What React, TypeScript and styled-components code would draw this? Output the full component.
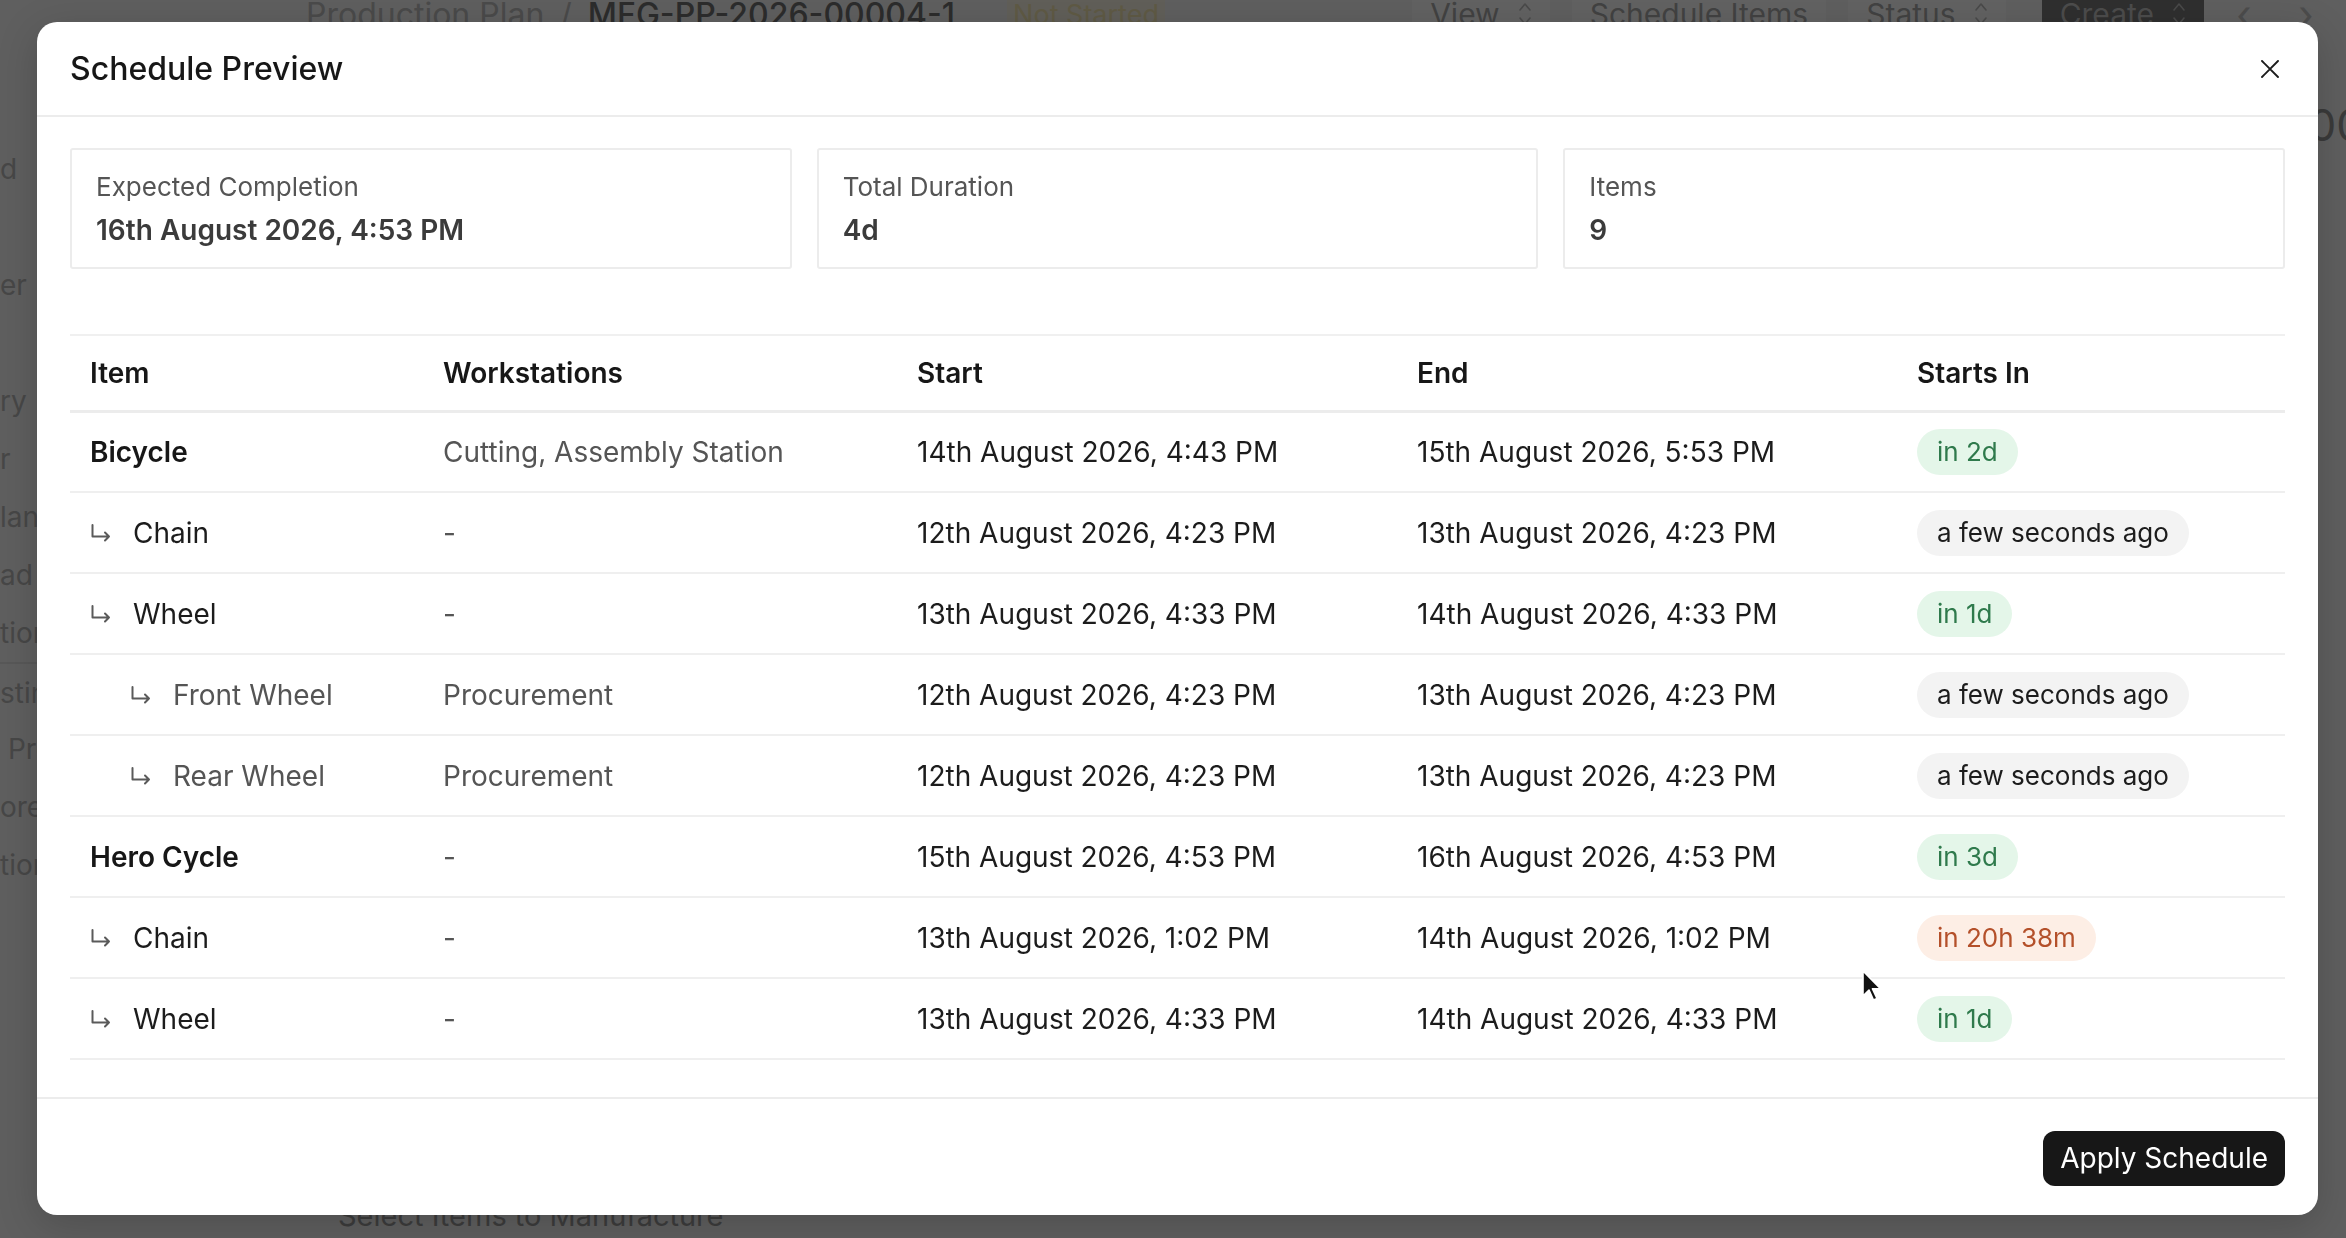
import * as React from 'react';
import styled, { createGlobalStyle, css } from 'styled-components';

type Tone = 'green' | 'gray' | 'orange';

type ScheduleRow = {
  name: string;
  level: number;
  workstations: string;
  start: string;
  end: string;
  startsIn: string;
  tone: Tone;
};

const rows: ScheduleRow[] = [
  { name: 'Bicycle', level: 0, workstations: 'Cutting, Assembly Station', start: '14th August 2026, 4:43 PM', end: '15th August 2026, 5:53 PM', startsIn: 'in 2d', tone: 'green' },
  { name: 'Chain', level: 1, workstations: '-', start: '12th August 2026, 4:23 PM', end: '13th August 2026, 4:23 PM', startsIn: 'a few seconds ago', tone: 'gray' },
  { name: 'Wheel', level: 1, workstations: '-', start: '13th August 2026, 4:33 PM', end: '14th August 2026, 4:33 PM', startsIn: 'in 1d', tone: 'green' },
  { name: 'Front Wheel', level: 2, workstations: 'Procurement', start: '12th August 2026, 4:23 PM', end: '13th August 2026, 4:23 PM', startsIn: 'a few seconds ago', tone: 'gray' },
  { name: 'Rear Wheel', level: 2, workstations: 'Procurement', start: '12th August 2026, 4:23 PM', end: '13th August 2026, 4:23 PM', startsIn: 'a few seconds ago', tone: 'gray' },
  { name: 'Hero Cycle', level: 0, workstations: '-', start: '15th August 2026, 4:53 PM', end: '16th August 2026, 4:53 PM', startsIn: 'in 3d', tone: 'green' },
  { name: 'Chain', level: 1, workstations: '-', start: '13th August 2026, 1:02 PM', end: '14th August 2026, 1:02 PM', startsIn: 'in 20h 38m', tone: 'orange' },
  { name: 'Wheel', level: 1, workstations: '-', start: '13th August 2026, 4:33 PM', end: '14th August 2026, 4:33 PM', startsIn: 'in 1d', tone: 'green' },
];

const stats = [
  { label: 'Expected Completion', value: '16th August 2026, 4:53 PM' },
  { label: 'Total Duration', value: '4d' },
  { label: 'Items', value: '9' },
];

// what peeks out of the sidebar left of the dialog
const sidebarBits = ['d', '', 'er', '', 'ry', 'r', 'lan', 'ad', 'tion', 'stin', ' Pro', 'ore', 'tion'];

const GlobalStyle = createGlobalStyle`
  html, body {
    margin: 0;
    padding: 0;
    overflow: hidden;
    background: #5f5f5f;
  }
  * {
    box-sizing: border-box;
  }
`;

export default function App() {
  return (
    <>
      <GlobalStyle />
      <Page>
        <PageHeader>
          <Crumb>Production Plan</Crumb>
          <CrumbSep>/</CrumbSep>
          <CrumbCurrent>MFG-PP-2026-00004-1</CrumbCurrent>
          <StatusTag>Not Started</StatusTag>
          <Spacer />
          <HeaderAction>
            View <Chevrons />
          </HeaderAction>
          <HeaderAction>Schedule Items</HeaderAction>
          <HeaderAction>
            Status <Chevrons />
          </HeaderAction>
          <HeaderAction dark>
            Create <Chevrons />
          </HeaderAction>
          <PagerArrow>‹</PagerArrow>
          <PagerArrow>›</PagerArrow>
        </PageHeader>
        <PageBody>
          <Sidebar>
            {sidebarBits.map((bit, i) => (
              <SidebarItem key={i} divided={i === 9}>
                {bit}
              </SidebarItem>
            ))}
          </Sidebar>
          <MainArea>
            <BigNumber>00</BigNumber>
            <SectionTitle>Select Items to Manufacture</SectionTitle>
          </MainArea>
        </PageBody>
      </Page>

      <Overlay>
        <Dialog>
          <DialogHeader>
            <DialogTitle>Schedule Preview</DialogTitle>
            <CloseButton aria-label="Close">
              <svg width="18" height="18" viewBox="0 0 18 18" fill="none">
                <path d="M1 1L17 17M17 1L1 17" stroke="#1c1c1c" strokeWidth="1.9" strokeLinecap="round" />
              </svg>
            </CloseButton>
          </DialogHeader>

          <DialogBody>
            <StatGrid>
              {stats.map(stat => (
                <StatCard key={stat.label}>
                  <StatLabel>{stat.label}</StatLabel>
                  <StatValue>{stat.value}</StatValue>
                </StatCard>
              ))}
            </StatGrid>

            <Table>
              <colgroup>
                <col style={{ width: 353 }} />
                <col style={{ width: 474 }} />
                <col style={{ width: 500 }} />
                <col style={{ width: 500 }} />
                <col style={{ width: 388 }} />
              </colgroup>
              <thead>
                <tr>
                  <Th>Item</Th>
                  <Th>Workstations</Th>
                  <Th>Start</Th>
                  <Th>End</Th>
                  <Th>Starts In</Th>
                </tr>
              </thead>
              <tbody>
                {rows.map((row, i) => (
                  <tr key={i}>
                    <Td>
                      <ItemCell level={row.level}>
                        {row.level > 0 && <ChildArrow />}
                        <ItemName level={row.level}>{row.name}</ItemName>
                      </ItemCell>
                    </Td>
                    <Td muted>{row.workstations}</Td>
                    <Td>{row.start}</Td>
                    <Td>{row.end}</Td>
                    <Td>
                      <Badge tone={row.tone}>{row.startsIn}</Badge>
                    </Td>
                  </tr>
                ))}
              </tbody>
            </Table>
          </DialogBody>

          <DialogFooter>
            <PrimaryButton>Apply Schedule</PrimaryButton>
          </DialogFooter>
        </Dialog>
        <Cursor>
          <svg width="22" height="34" viewBox="0 0 22 34">
            <path d="M2 2 L2 27 L8 21 L12.5 31 L16 29.5 L11.5 19.8 L19.5 19.8 Z" fill="#111" stroke="#fff" strokeWidth="1.6" strokeLinejoin="round" />
          </svg>
        </Cursor>
      </Overlay>
    </>
  );
}

function Chevrons() {
  return (
    <ChevronIcon width="14" height="26" viewBox="0 0 14 26" fill="none">
      <path d="M2 9L7 3L12 9M2 17L7 23L12 17" stroke="currentColor" strokeWidth="1.6" strokeLinecap="round" strokeLinejoin="round" />
    </ChevronIcon>
  );
}

function ChildArrow() {
  return (
    <ArrowIcon width="22" height="18" viewBox="0 0 22 18" fill="none">
      <path d="M2.5 1V12.5H19M15 8.5L19 12.5L15 16.5" stroke="currentColor" strokeWidth="2" strokeLinecap="round" strokeLinejoin="round" />
    </ArrowIcon>
  );
}

const fontStack = `Inter, 'Noto Sans', 'DejaVu Sans', sans-serif`;

/* page behind the dialog (already dimmed) */

const Page = styled.div`
  width: 2346px;
  height: 1238px;
  overflow: hidden;
  background: #5f5f5f;
  font-family: ${fontStack};
  display: flex;
  flex-direction: column;
`;

const PageHeader = styled.div`
  display: flex;
  align-items: center;
  height: 44px;
  margin-top: -8px;
  padding: 0 18px 0 306px;
  font-size: 32px;
  color: #464646;
  white-space: nowrap;
`;

const Crumb = styled.span`
  color: #4a4a4a;
`;

const CrumbSep = styled.span`
  margin: 0 16px;
  color: #4a4a4a;
`;

const CrumbCurrent = styled.span`
  color: #2c2c2c;
  font-weight: 500;
`;

const StatusTag = styled.span`
  margin-left: 52px;
  padding: 0 6px;
  font-size: 27px;
  color: #5f5a45;
  background: #615f59;
`;

const Spacer = styled.div`
  flex: 1;
`;

const HeaderAction = styled.span<{ dark?: boolean }>`
  display: inline-flex;
  align-items: center;
  gap: 18px;
  height: 44px;
  padding: 0 18px;
  margin-left: 22px;
  font-size: 30px;
  color: #424242;
  background: #626262;
  border-radius: 6px;
  ${p =>
    p.dark &&
    css`
      background: #2f2f2f;
      color: #4c4c4c;
      margin-left: 36px;
    `}
`;

const ChevronIcon = styled.svg`
  color: #4a4a4a;
`;

const PagerArrow = styled.span`
  width: 44px;
  margin-left: 18px;
  text-align: center;
  font-size: 40px;
  color: #4c4c4c;
`;

const PageBody = styled.div`
  flex: 1;
  display: flex;
`;

const Sidebar = styled.div`
  width: 40px;
  padding-top: 104px;
  display: flex;
  flex-direction: column;
  overflow: hidden;
`;

const SidebarItem = styled.div<{ divided?: boolean }>`
  height: 58px;
  font-size: 28px;
  line-height: 58px;
  color: #474747;
  white-space: pre;
  ${p =>
    p.divided &&
    css`
      border-top: 2px solid #585858;
    `}
`;

const MainArea = styled.div`
  flex: 1;
  display: flex;
  flex-direction: column;
  padding-left: 298px;
`;

const BigNumber = styled.div`
  align-self: flex-end;
  margin-top: 62px;
  margin-right: -18px;
  font-size: 44px;
  color: #3a3a3a;
`;

const SectionTitle = styled.div`
  margin-top: auto;
  margin-bottom: 5px;
  font-size: 29px;
  line-height: 34px;
  color: #3c3c3c;
`;

/* dialog */

const Overlay = styled.div`
  position: fixed;
  inset: 0;
  padding: 22px 28px 23px 37px;
  display: flex;
  font-family: ${fontStack};
`;

const Dialog = styled.div`
  flex: 1;
  display: flex;
  flex-direction: column;
  background: #fff;
  border-radius: 20px;
  overflow: hidden;
  box-shadow: 0 10px 40px rgba(0, 0, 0, 0.18);
`;

const DialogHeader = styled.div`
  height: 95px;
  flex: none;
  display: flex;
  align-items: center;
  justify-content: space-between;
  padding: 0 30px 0 33px;
  border-bottom: 2px solid #ececec;
`;

const DialogTitle = styled.h2`
  margin: 0;
  font-size: 32px;
  font-weight: 500;
  color: #171717;
`;

const CloseButton = styled.button`
  display: flex;
  align-items: center;
  justify-content: center;
  width: 36px;
  height: 36px;
  padding: 0;
  border: 0;
  background: transparent;
  cursor: pointer;
`;

const DialogBody = styled.div`
  flex: 1;
  padding: 31px 33px 0;
`;

const StatGrid = styled.div`
  display: grid;
  grid-template-columns: repeat(3, 1fr);
  gap: 25px;
`;

const StatCard = styled.div`
  height: 121px;
  display: flex;
  flex-direction: column;
  justify-content: center;
  gap: 10px;
  padding: 0 24px;
  border: 2px solid #ececec;
  border-radius: 3px;
`;

const StatLabel = styled.div`
  font-size: 26px;
  line-height: 32px;
  color: #555;
`;

const StatValue = styled.div`
  font-size: 28px;
  line-height: 34px;
  font-weight: 600;
  color: #3b3b3b;
`;

const Table = styled.table`
  width: 100%;
  margin-top: 65px;
  border-collapse: collapse;
  table-layout: fixed;
  border-top: 2px solid #f0f0f0;
`;

const Th = styled.th`
  height: 76px;
  padding: 0 20px;
  text-align: left;
  font-size: 28px;
  font-weight: 600;
  color: #171717;
  border-bottom: 3px solid #ececec;
`;

const Td = styled.td<{ muted?: boolean }>`
  height: 81px;
  padding: 0 20px;
  font-size: 28px;
  color: ${p => (p.muted ? '#555' : '#1c1c1c')};
  border-bottom: 2px solid #efefef;
  white-space: nowrap;
`;

const ItemCell = styled.div<{ level: number }>`
  display: flex;
  align-items: center;
  padding-left: ${p => (p.level > 1 ? (p.level - 1) * 40 : 0)}px;
`;

const ArrowIcon = styled.svg`
  flex: none;
  margin-right: 21px;
  color: #5a5a5a;
`;

const ItemName = styled.span<{ level: number }>`
  font-weight: ${p => (p.level === 0 ? 600 : 400)};
  color: ${p => (p.level === 0 ? '#171717' : p.level === 1 ? '#1c1c1c' : '#555')};
`;

const badgeTones = {
  green: css`
    background: #e4f6e9;
    color: #2f7a4c;
  `,
  gray: css`
    background: #f3f3f3;
    color: #1c1c1c;
  `,
  orange: css`
    background: #fdeee5;
    color: #b4502a;
  `,
};

const Badge = styled.span<{ tone: Tone }>`
  display: inline-flex;
  align-items: center;
  height: 46px;
  padding: 0 20px;
  border-radius: 999px;
  font-size: 26px;
  ${p => badgeTones[p.tone]}
`;

const DialogFooter = styled.div`
  height: 120px;
  flex: none;
  display: flex;
  align-items: center;
  justify-content: flex-end;
  padding: 0 33px;
  margin-top: 37px;
  border-top: 2px solid #ececec;
`;

const PrimaryButton = styled.button`
  height: 55px;
  padding: 0 17px;
  border: 0;
  border-radius: 12px;
  background: #171717;
  color: #fff;
  font-family: ${fontStack};
  font-size: 28px;
  cursor: pointer;
`;

const Cursor = styled.div`
  position: absolute;
  left: 1861px;
  top: 969px;
  pointer-events: none;
`;
